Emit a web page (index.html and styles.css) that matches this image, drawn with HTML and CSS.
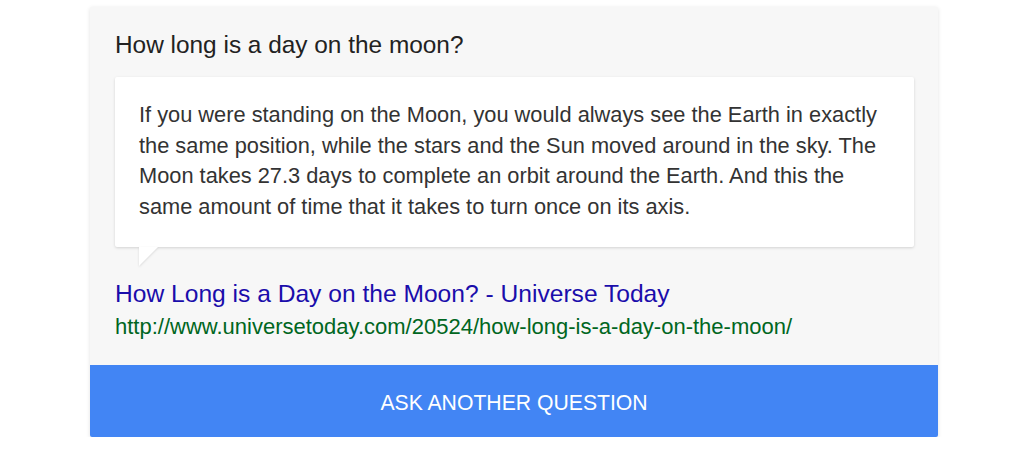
FILE: index.html
```html
<!DOCTYPE html>
<html>
<head>
<meta charset="utf-8">
<link rel="stylesheet" href="styles.css">
</head>
<body>
<div class="card">
  <div class="content">
    <h1 class="question">How long is a day on the moon?</h1>
    <div class="bubble">
      <p>If you were standing on the Moon, you would always see the Earth in exactly the same position, while the stars and the Sun moved around in the sky. The Moon takes 27.3 days to complete an orbit around the Earth. And this the same amount of time that it takes to turn once on its axis.</p>
    </div>
    <a class="source-title" href="#">How Long is a Day on the Moon? - Universe Today</a>
    <div class="source-url">http://www.universetoday.com/20524/how-long-is-a-day-on-the-moon/</div>
  </div>
  <button class="ask">ASK ANOTHER QUESTION</button>
</div>
</body>
</html>
```
FILE: styles.css
```css
html, body {
  margin: 0;
  padding: 0;
  background: #ffffff;
  font-family: "Liberation Sans", Arial, sans-serif;
}
body {
  padding-top: 7px;
}
.card {
  width: 848px;
  margin-left: 90px;
  background: #f7f7f7;
  border-radius: 2px;
  box-shadow: 0 1px 4px rgba(0,0,0,0.12);
  display: flex;
  flex-direction: column;
}
.content {
  padding: 24px 24px 25px 25px;
  display: flex;
  flex-direction: column;
}
.question {
  margin: 0;
  font-size: 24.4px;
  font-weight: normal;
  color: #222222;
  line-height: 28px;
}
.bubble {
  position: relative;
  margin-top: 18px;
  background: #ffffff;
  border-radius: 2px;
  box-shadow: 0 1px 3px rgba(0,0,0,0.15);
  padding: 23px 24px 24px 24px;
}
.bubble::after {
  content: "";
  position: absolute;
  left: 24px;
  bottom: -19px;
  width: 0;
  height: 0;
  border-right: 19px solid transparent;
  border-top: 19px solid #ffffff;
  filter: drop-shadow(0 1px 1px rgba(0,0,0,0.12));
}
.bubble p {
  margin: 0;
  font-size: 21.8px;
  line-height: 30.7px;
  color: #333333;
}
.source-title {
  margin-top: 33px;
  font-size: 24.6px;
  line-height: 28px;
  color: #1a0dab;
  text-decoration: none;
}
.source-url {
  margin-top: 6px;
  font-size: 22px;
  line-height: 26px;
  color: #006621;
}
.ask {
  height: 72px;
  border: none;
  background: #4285f4;
  color: #ffffff;
  font-family: "Liberation Sans", Arial, sans-serif;
  font-size: 21.2px;
  border-radius: 0 0 2px 2px;
  padding: 5px 0 0 0;
  cursor: pointer;
}
```
